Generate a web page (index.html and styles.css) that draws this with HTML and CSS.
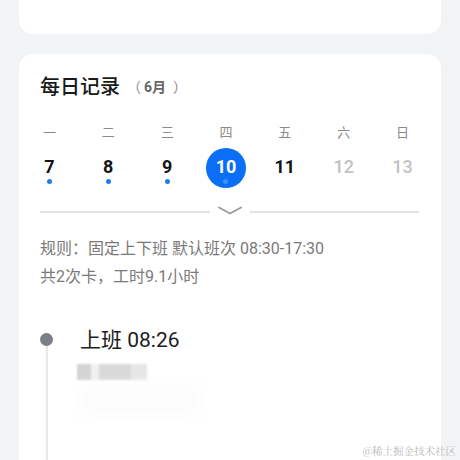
FILE: index.html
```html
<html>
	<head>
		<title>每日记录</title>
		<meta charset="utf-8">
		<meta name="viewport" content="width=device-width, initial-scale=1, maximum-scale=1"/>
		<link rel="stylesheet" href="styles.css">
	</head>

	<body>
		<div class="page">
			<div class="card card-top"></div>

			<div class="card record">
				<div class="record-title">每日记录<span class="month">（<b>6月</b>）</span></div>

				<div class="week">
					<div class="weekday">一</div>
					<div class="weekday">二</div>
					<div class="weekday">三</div>
					<div class="weekday">四</div>
					<div class="weekday">五</div>
					<div class="weekday">六</div>
					<div class="weekday">日</div>
				</div>

				<div class="week dates">
					<div class="day-cell"><div class="day has-dot">7</div></div>
					<div class="day-cell"><div class="day has-dot">8</div></div>
					<div class="day-cell"><div class="day has-dot">9</div></div>
					<div class="day-cell"><div class="day has-dot active">10</div></div>
					<div class="day-cell"><div class="day">11</div></div>
					<div class="day-cell"><div class="day future">12</div></div>
					<div class="day-cell"><div class="day future">13</div></div>
				</div>

				<div class="fold">
					<div class="fold-line"></div>
					<svg class="fold-arrow" width="24" height="10" viewBox="0 0 24 10">
						<path d="M1 1.5 L12 7.5 L23 1.5" fill="none" stroke="#9a9a9a" stroke-width="1.8" stroke-linecap="round" stroke-linejoin="round"/>
					</svg>
					<div class="fold-line"></div>
				</div>

				<div class="rule">
					<p>规则：固定上下班 默认班次 08:30-17:30</p>
					<p>共2次卡，工时9.1小时</p>
				</div>

				<div class="timeline">
					<div class="punch">
						<div class="punch-title">上班 08:26</div>
						<div class="punch-place">
							<span class="m m1"></span><span class="m m2"></span><span class="m m3"></span><span class="m m4"></span>
						</div>
						<div class="punch-haze"></div>
					</div>
				</div>
			</div>
		</div>

		<div class="watermark">@稀土掘金技术社区</div>
	</body>
</html>
```

FILE: styles.css
```css
body {
	margin: 0;
	padding: 0;
	background: #f2f3f5;
	font-family: Roboto, "Noto Sans CJK SC", sans-serif;
	color: #1f1f1f;
	overflow: hidden;
}

.page {
	width: 422px;
	height: 460px;
	margin: 0 auto 0 19px;
	overflow: hidden;
}

.card {
	background: #fff;
	border-radius: 14px;
}

.card-top {
	height: 48px;
	margin-top: -14px;
}

.record {
	margin-top: 20px;
	padding-top: 18px;
	height: 460px;
}

.record-title {
	padding-left: 21px;
	font-size: 20px;
	line-height: 28px;
	font-family: "Noto Sans CJK SC", sans-serif;
	font-weight: 500;
	color: #1a1a1a;
}

.month {
	font-size: 14px;
	font-weight: normal;
	color: #8a8a8a;
	margin-left: 7px;
	vertical-align: 2px;
	font-family: "Noto Sans CJK SC", sans-serif;
}

.month b {
	font-family: Roboto, "Noto Sans CJK SC", sans-serif;
	color: #666;
	margin: 0 7px 0 3px;
}

.week {
	display: grid;
	grid-template-columns: repeat(7, 1fr);
	padding: 0 9px 0 1px;
	margin-top: 22px;
}

.weekday {
	text-align: center;
	font-size: 13px;
	line-height: 20px;
	color: #8a8a8a;
	font-family: "Noto Sans CJK SC", sans-serif;
	margin-top: -1px;
}

.dates {
	margin-top: 8px;
}

.day-cell {
	display: flex;
	justify-content: center;
}

.day {
	position: relative;
	width: 40px;
	height: 40px;
	border-radius: 50%;
	display: flex;
	align-items: center;
	justify-content: center;
	font-size: 18px;
	font-weight: bold;
	color: #141414;
	margin-top: -2px;
	padding-bottom: 3px;
	box-sizing: border-box;
}

.day.has-dot::after {
	content: "";
	position: absolute;
	left: 17.5px;
	top: 30.5px;
	width: 5px;
	height: 5px;
	border-radius: 50%;
	background: #1d7fe3;
}

.day.active {
	background: #0b6ef6;
	color: #fff;
}

.day.active::after {
	background: #3d8ef8;
}

.day.future {
	color: #c2c2c2;
	font-weight: 500;
}

.fold {
	display: flex;
	align-items: center;
	padding: 0 22px 0 21px;
	margin-top: 16px;
	height: 14px;
}

.fold-line {
	flex: 1;
	height: 1.5px;
	background: #e2e2e2;
	margin-top: 2px;
}

.fold-arrow {
	margin: 0 8px;
}

.rule {
	padding-left: 21px;
	margin-top: 17px;
	color: #7a7a7a;
	font-size: 16px;
	line-height: 28px;
}

.rule p {
	margin: 0;
}

.timeline {
	margin-top: 34px;
	padding-left: 21px;
}

.punch {
	position: relative;
	padding-left: 40px;
	padding-bottom: 120px;
}

.punch::before {
	content: "";
	position: absolute;
	left: 0;
	top: 8px;
	width: 13px;
	height: 13px;
	border-radius: 50%;
	background: #7c7f88;
}

.punch::after {
	content: "";
	position: absolute;
	left: 5.5px;
	top: 21px;
	bottom: 0;
	width: 2px;
	background: #e7e7e7;
}

.punch-title {
	font-size: 21px;
	line-height: 30px;
	color: #1c1c1c;
	margin-top: 1px;
}

.punch-place {
	display: flex;
	margin-top: 9px;
	height: 18px;
	filter: blur(1px);
}

.m {
	display: block;
	height: 16px;
}

.m1 { width: 14px; background: #d4d4d4; margin-left: -3px; }
.m2 { width: 8px; background: #f1f1f1; }
.m3 { width: 32px; background: #d9d9d9; }
.m4 { width: 16px; background: #e6e6e6; }

.punch-haze {
	width: 120px;
	height: 30px;
	margin-top: 4px;
	background: #fcfcfc;
	filter: blur(6px);
}

.watermark {
	position: absolute;
	right: 4px;
	bottom: 2px;
	font-size: 10.5px;
	color: #b9b9b9;
	font-family: "Noto Serif CJK SC", "Noto Sans CJK SC", serif;
}
```
